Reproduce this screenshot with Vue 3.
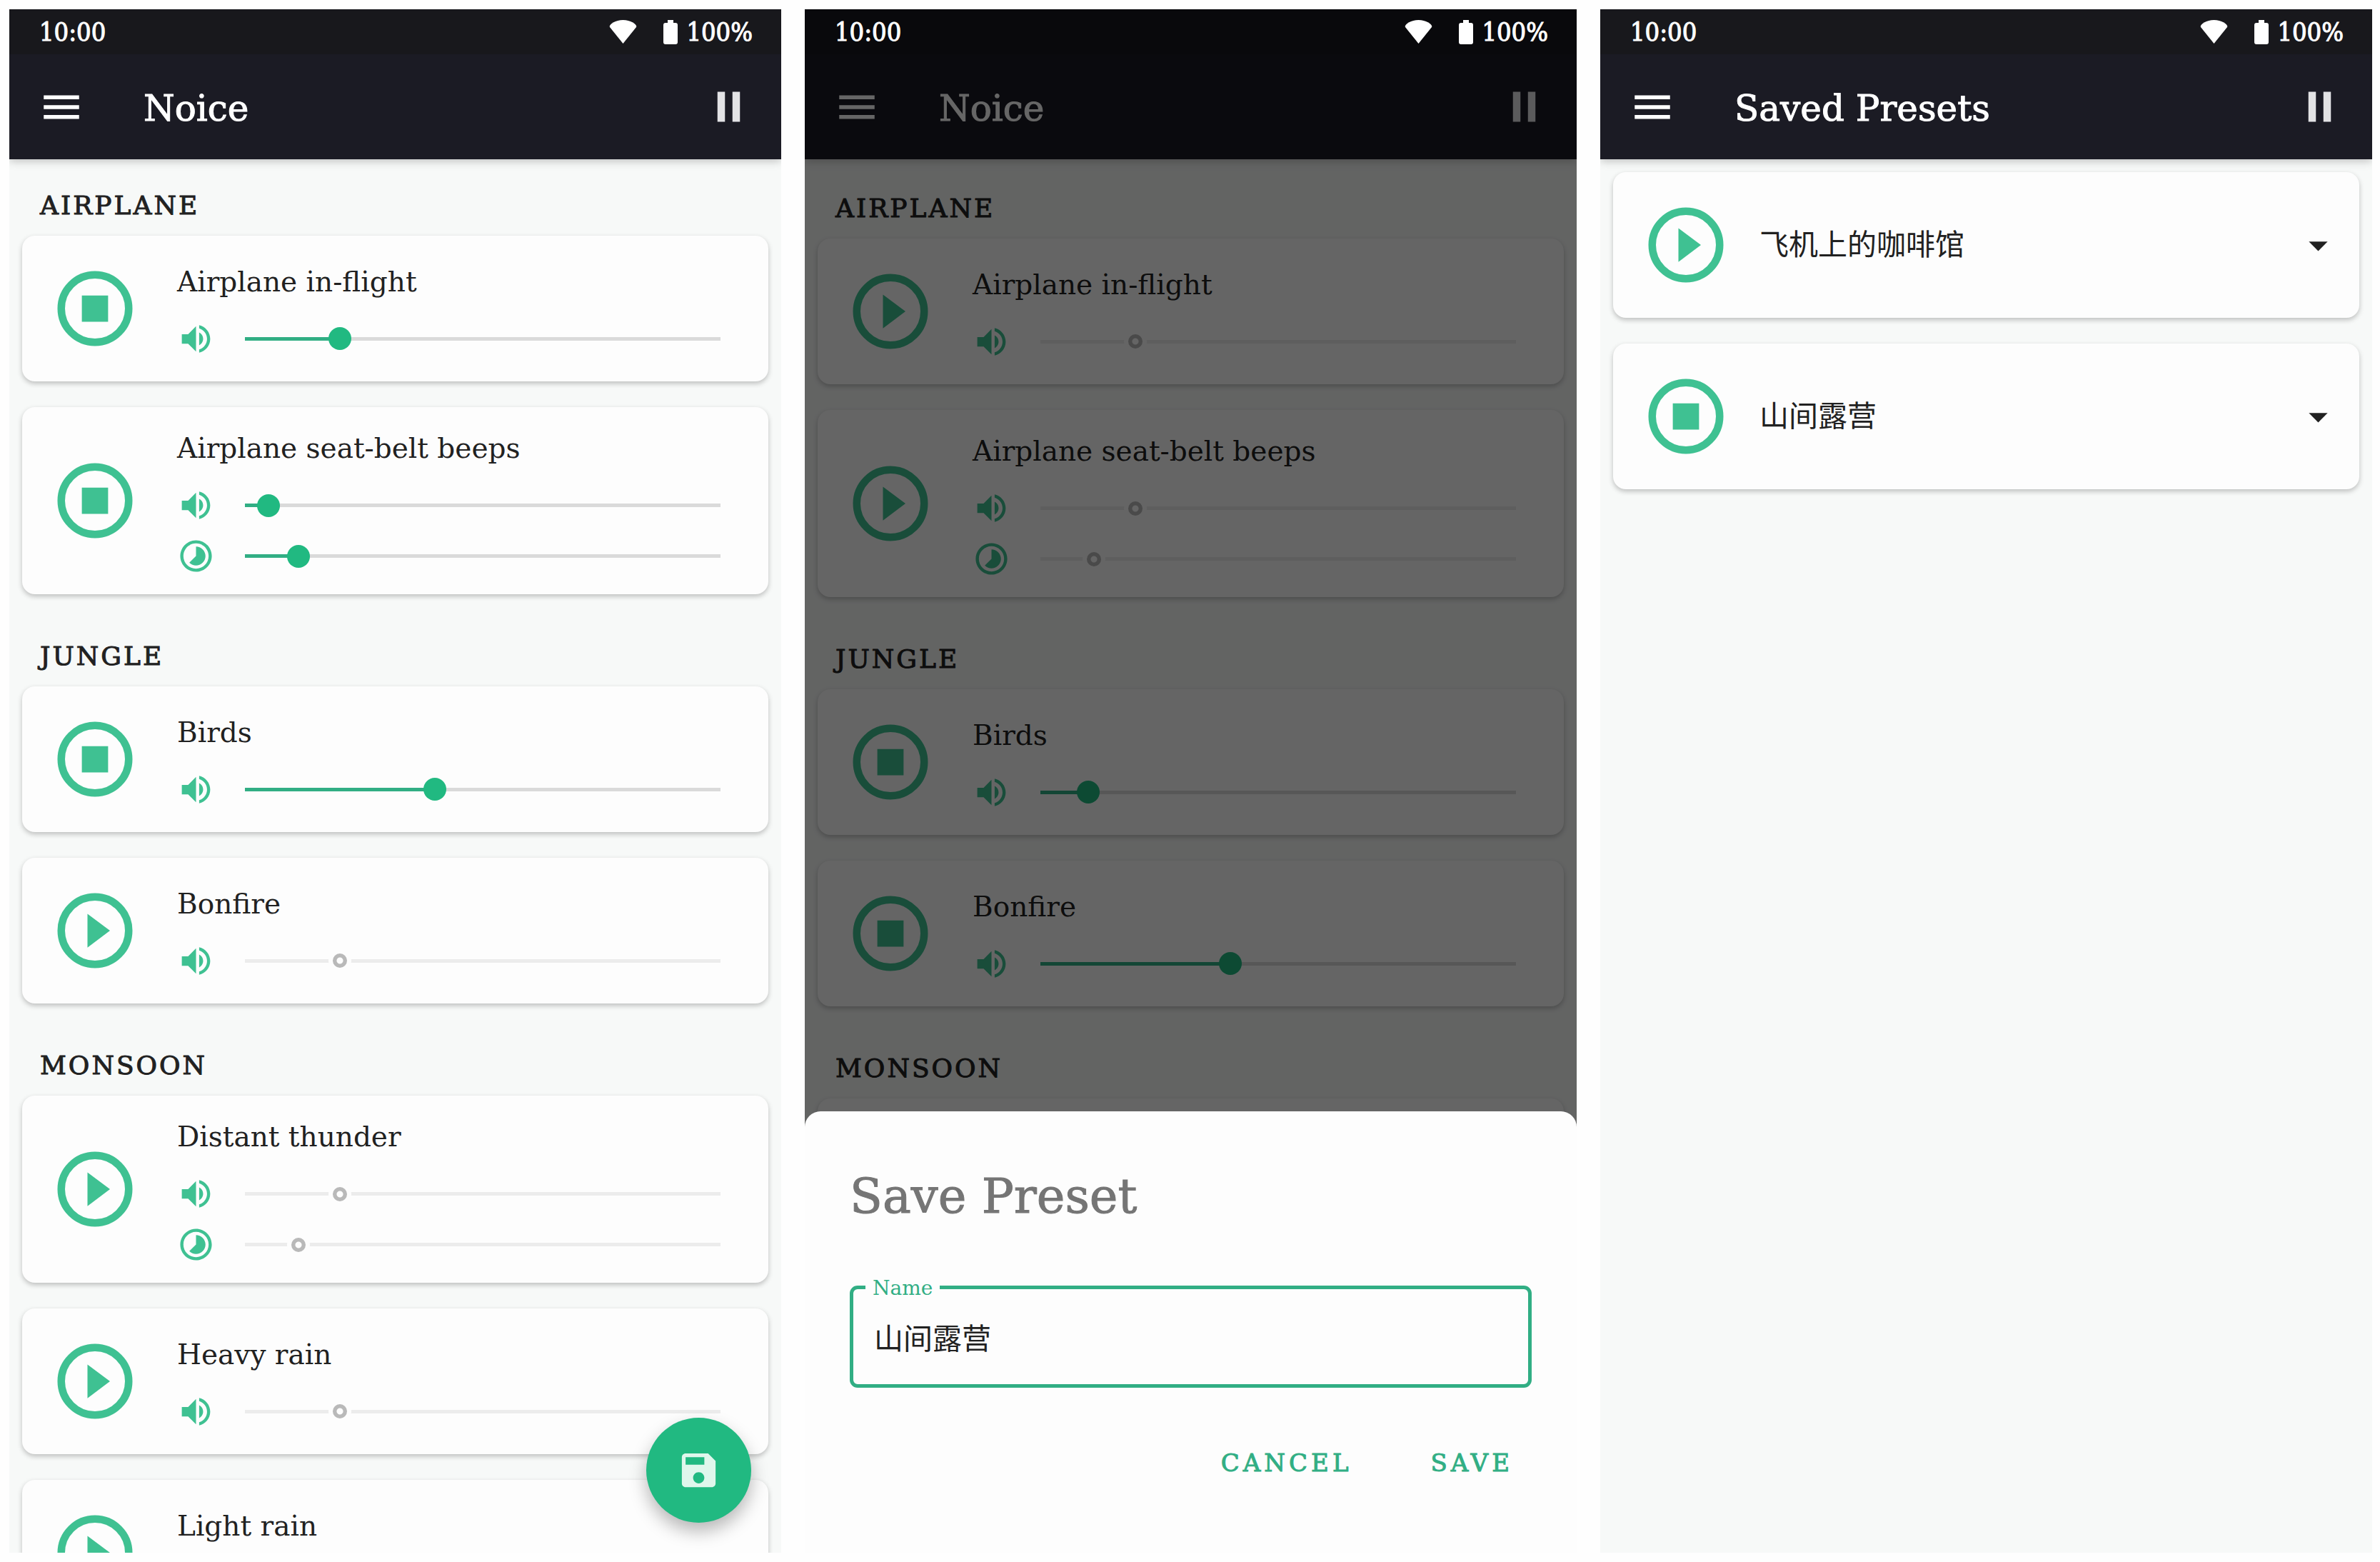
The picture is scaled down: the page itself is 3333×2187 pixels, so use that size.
<script setup>
import { reactive, ref } from 'vue'

const vol = (value) => ({ kind: 'volume', value, max: 20 })
const time = (value) => ({ kind: 'time', value, max: 80 })

const library = (states) => [
  {
    title: 'AIRPLANE',
    sounds: [
      { name: 'Airplane in-flight', playing: states[0], controls: [vol(4)] },
      { name: 'Airplane seat-belt beeps', playing: states[1], controls: [vol(states[1] ? 1 : 4), time(9)] },
    ],
  },
  {
    title: 'JUNGLE',
    sounds: [
      { name: 'Birds', playing: states[2], controls: [vol(states[3] ? 2 : 8)] },
      { name: 'Bonfire', playing: states[3], controls: [vol(states[3] ? 8 : 4)] },
    ],
  },
  {
    title: 'MONSOON',
    sounds: [
      { name: 'Distant thunder', playing: false, controls: [vol(4), time(9)] },
      { name: 'Heavy rain', playing: false, controls: [vol(4)] },
      { name: 'Light rain', playing: false, controls: [vol(4)] },
    ],
  },
]

const screens = reactive([
  { id: 'library', title: 'Noice', sections: library([true, true, true, false]), fab: true },
  { id: 'save', title: 'Noice', sections: library([false, false, true, true]), dialog: true },
  {
    id: 'presets',
    title: 'Saved Presets',
    presets: [
      { name: '飞机上的咖啡馆', playing: false },
      { name: '山间露营', playing: true },
    ],
  },
])

const presetName = ref('山间露营')

const icons = {
  volume:
    'M3 9v6h4l5 5V4L7 9H3zm13.5 3c0-1.77-1.02-3.29-2.5-4.03v8.05c1.48-.73 2.5-2.25 2.5-4.02zM14 3.23v2.06c2.89.86 5 3.54 5 6.71s-2.11 5.85-5 6.71v2.06c4.01-.91 7-4.49 7-8.77s-2.99-7.86-7-8.77z',
  time:
    'M16.24 7.76C15.07 6.59 13.54 6 12 6v6l-4.24 4.24c2.34 2.34 6.14 2.34 8.49 0 2.34-2.34 2.34-6.14-.01-8.48zM12 2C6.48 2 2 6.48 2 12s4.48 10 10 10 10-4.48 10-10S17.52 2 12 2zm0 18c-4.42 0-8-3.58-8-8s3.58-8 8-8 8 3.58 8 8-3.58 8-8 8z',
  play: 'M10 16.5l6-4.5-6-4.5v9z',
  stop: 'M8.5 8.5h7v7h-7z',
}
</script>

<template>
  <main class="board">
    <section v-for="screen in screens" :key="screen.id" class="phone" :class="'phone-' + screen.id">
      <div class="status">
        <span>10:00</span>
        <span class="status-right">
          <svg class="wifi" viewBox="0 0 39 33"><path d="M19.5 33L1 10C-1 7 8 0 19.5 0S40 7 38 10z" /></svg>
          <svg class="battery" viewBox="0 0 20 34"><path d="M6 0h8v4h3a3 3 0 0 1 3 3v24a3 3 0 0 1-3 3H3a3 3 0 0 1-3-3V7a3 3 0 0 1 3-3h3z" /></svg>
          <span>100%</span>
        </span>
      </div>
      <header class="appbar">
        <button class="icon-button" aria-label="Menu">
          <svg class="menu" viewBox="0 0 24 24"><path d="M3 6h18v2H3zM3 11h18v2H3zM3 16h18v2H3z" /></svg>
        </button>
        <h1>{{ screen.title }}</h1>
        <button class="icon-button" aria-label="Pause">
          <svg class="pause" viewBox="0 0 24 24"><path d="M6 4h4v16H6zM14 4h4v16h-4z" /></svg>
        </button>
      </header>

      <div v-if="screen.sections" class="library">
        <section v-for="group in screen.sections" :key="group.title" class="group">
          <h2>{{ group.title }}</h2>
          <div class="cards">
            <article v-for="sound in group.sounds" :key="sound.name" class="card">
              <button class="toggle" :aria-label="(sound.playing ? 'Stop ' : 'Play ') + sound.name" @click="sound.playing = !sound.playing">
                <svg viewBox="0 0 24 24">
                  <circle cx="12" cy="12" r="9" />
                  <path :d="sound.playing ? icons.stop : icons.play" />
                </svg>
              </button>
              <div class="sound">
                <h3>{{ sound.name }}</h3>
                <label v-for="control in sound.controls" :key="control.kind" class="control">
                  <svg viewBox="0 0 24 24"><path :d="icons[control.kind]" /></svg>
                  <input
                    v-model.number="control.value"
                    type="range"
                    min="0"
                    :max="control.max"
                    :disabled="!sound.playing"
                    :aria-label="sound.name + ' ' + control.kind"
                    :style="{ '--level': control.value / control.max }"
                  />
                </label>
              </div>
            </article>
          </div>
        </section>
      </div>

      <div v-if="screen.presets" class="cards presets">
        <article v-for="preset in screen.presets" :key="preset.name" class="card">
          <button class="toggle" :aria-label="(preset.playing ? 'Stop ' : 'Play ') + preset.name" @click="preset.playing = !preset.playing">
            <svg viewBox="0 0 24 24">
              <circle cx="12" cy="12" r="9" />
              <path :d="preset.playing ? icons.stop : icons.play" />
            </svg>
          </button>
          <h3 class="preset-name">{{ preset.name }}</h3>
          <button class="icon-button more" aria-label="More options">
            <svg viewBox="0 0 24 24"><path d="M7 10l5 5 5-5z" /></svg>
          </button>
        </article>
      </div>

      <button v-if="screen.fab" class="fab" aria-label="Save preset">
        <svg viewBox="0 0 24 24">
          <path d="M17 3H5c-1.11 0-2 .9-2 2v14c0 1.1.89 2 2 2h14c1.1 0 2-.9 2-2V7l-4-4zm-5 16c-1.66 0-3-1.34-3-3s1.34-3 3-3 3 1.34 3 3-1.34 3-3 3zm3-10H5V5h10v4z" />
        </svg>
      </button>

      <template v-if="screen.dialog">
        <div class="scrim"></div>
        <form class="sheet" @submit.prevent>
          <h2>Save Preset</h2>
          <div class="field">
            <label for="preset-name">Name</label>
            <input id="preset-name" v-model="presetName" type="text" />
          </div>
          <div class="actions">
            <button type="button">CANCEL</button>
            <button type="submit">SAVE</button>
          </div>
        </form>
      </template>
    </section>
  </main>
</template>

<style>
body {
  margin: 0;
  background: #fefefe;
}
</style>

<style scoped>
* {
  box-sizing: border-box;
}

h1, h2, h3 {
  margin: 0;
  font-weight: 400;
}

button, input {
  margin: 0;
  padding: 0;
  border: 0;
  background: none;
  color: inherit;
  font-family: inherit;
}

svg {
  display: block;
  fill: currentColor;
}

.board {
  display: grid;
  grid-template-columns: repeat(3, minmax(0, 1fr));
  gap: 33px;
  height: 100vh;
  padding: 13px 11px 13px 13px;
  font-family: "DejaVu Serif", "Noto Sans CJK SC", serif;
  color: #212121;
}

.phone {
  position: relative;
  display: flex;
  flex-direction: column;
  overflow: hidden;
  background: #f7f9f8;
}

.status {
  position: relative;
  z-index: 2;
  flex: none;
  display: flex;
  align-items: center;
  justify-content: space-between;
  height: 63px;
  padding: 0 40px 0 42px;
  background: #18181c;
  color: #fff;
  font-family: "DejaVu Serif Condensed", "DejaVu Serif", serif;
  font-size: 36px;
  line-height: 63px;
  -webkit-text-stroke: 1px currentColor;
}

.phone-save .status {
  background: #09090c;
}

.status-right {
  display: flex;
  align-items: center;
}

.wifi {
  width: 39px;
  height: 33px;
  margin-right: 37px;
}

.battery {
  width: 20px;
  height: 34px;
  margin-right: 12px;
}

.appbar {
  position: relative;
  flex: none;
  display: flex;
  align-items: center;
  height: 147px;
  padding: 0 42px 0 40px;
  background: #1b1b24;
  color: #fff;
  box-shadow: 0 2px 12px rgba(0, 0, 0, 0.25);
}

.appbar h1 {
  flex: 1;
  margin-left: 82px;
  padding-top: 4px;
  font-size: 50px;
  line-height: 64px;
  -webkit-text-stroke: 1px currentColor;
}

.menu {
  width: 66px;
  height: 66px;
}

.pause {
  width: 63px;
  height: 63px;
  color: #e3e3e5;
}

.library {
  display: flex;
  flex-direction: column;
  gap: 62px;
  padding: 40px 18px 0;
}

.phone-save .library {
  padding-top: 44px;
}

.group h2 {
  margin: 0 0 17px 25px;
  font-size: 36px;
  line-height: 50px;
  letter-spacing: 3px;
  -webkit-text-stroke: 1px currentColor;
}

.cards {
  display: flex;
  flex-direction: column;
  gap: 36px;
}

.presets {
  padding: 18px 18px 0;
}

.card {
  display: flex;
  align-items: center;
  min-height: 204px;
  padding: 0 51px 0 39px;
  border-radius: 18px;
  background: #fdfdfd;
  box-shadow: 0 3px 7px rgba(0, 0, 0, 0.24);
}

.toggle {
  flex: none;
  color: #3fc192;
}

.toggle svg {
  width: 126px;
  height: 126px;
}

.toggle circle {
  fill: none;
  stroke: currentColor;
  stroke-width: 2;
}

.sound {
  flex: 1;
  min-width: 0;
  margin-left: 52px;
  padding: 32px 0 18px;
}

.sound h3 {
  margin-bottom: 18px;
  font-size: 39px;
  line-height: 52px;
}

.control {
  display: flex;
  align-items: center;
  gap: 26px;
  height: 71px;
}

.control svg {
  flex: none;
  width: 53px;
  height: 53px;
  color: #3fc192;
}

.control input {
  --fill: #31ae84;
  --rest: #dadada;
  --at: calc(var(--level) * 100%);
  flex: 1;
  min-width: 0;
  height: 32px;
  appearance: none;
  background: linear-gradient(to right, var(--fill) var(--at), var(--rest) var(--at)) center / calc(100% - 32px) 5px no-repeat;
}

.control input:disabled {
  --fill: #ececec;
  --rest: #ececec;
}

.control input::-webkit-slider-thumb {
  appearance: none;
  width: 32px;
  height: 32px;
  border-radius: 50%;
  background: #21b981;
}

.control input:disabled::-webkit-slider-thumb {
  border: 6px solid #fdfdfd;
  background: radial-gradient(circle, #fdfdfd 4px, #b9b9b9 5px);
}

.card .preset-name {
  flex: 1;
  margin-left: 40px;
  font-size: 41px;
  line-height: 56px;
}

.presets .card {
  padding-right: 26px;
}

.more svg {
  width: 63px;
  height: 63px;
  color: #212121;
}

.fab {
  position: absolute;
  right: 42px;
  bottom: 42px;
  display: grid;
  place-items: center;
  width: 147px;
  height: 147px;
  border-radius: 50%;
  background: #21b981;
  color: #dff7ec;
  box-shadow: 0 12px 24px rgba(0, 0, 0, 0.28);
}

.fab svg {
  width: 63px;
  height: 63px;
}

.scrim {
  position: absolute;
  inset: 0;
  z-index: 1;
  background: rgba(0, 0, 0, 0.6);
}

.sheet {
  position: absolute;
  right: 0;
  bottom: 0;
  left: 0;
  z-index: 2;
  padding: 80px 63px 76px;
  border-radius: 22px 22px 0 0;
  background: #fdfdfd;
}

.sheet h2 {
  margin-bottom: 86px;
  color: #757575;
  font-size: 67px;
  line-height: 78px;
  -webkit-text-stroke: 1px currentColor;
}

.field {
  position: relative;
}

.field label {
  position: absolute;
  top: -12px;
  left: 22px;
  padding: 0 10px;
  background: #fdfdfd;
  color: #31ae84;
  font-size: 28px;
  line-height: 32px;
}

.field input {
  display: block;
  width: 100%;
  height: 143px;
  padding: 0 29px 2px;
  border: 5px solid #31ae84;
  border-radius: 11px;
  outline: 0;
  color: #212121;
  font-size: 41px;
}

.actions {
  display: flex;
  justify-content: flex-end;
  gap: 58px;
  margin-top: 55px;
}

.actions button {
  height: 100px;
  padding: 0 26px;
  color: #31ae84;
  font-size: 34px;
  letter-spacing: 5px;
  -webkit-text-stroke: 1px currentColor;
}
</style>
